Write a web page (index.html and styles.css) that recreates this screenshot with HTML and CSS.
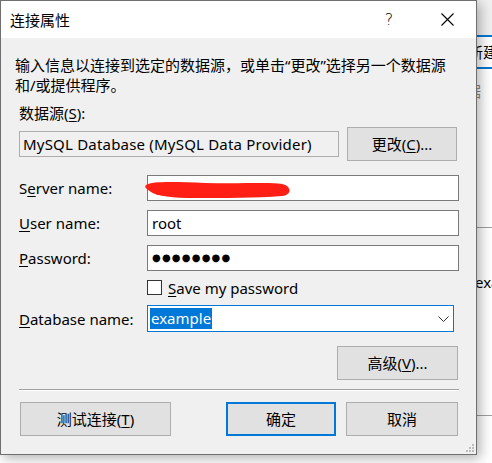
FILE: index.html
```html
<!DOCTYPE html>
<html lang="zh-CN">
<head>
<meta charset="utf-8">
<title>连接属性</title>
<link rel="stylesheet" href="styles.css">
</head>
<body>
<div class="backdrop">
  <div class="bg-toolbar"></div>
  <div class="bg-button">新建</div>
  <div class="bg-hint">数据可</div>
  <div class="bg-line bg-line-1"></div>
  <div class="bg-text">exa</div>
  <div class="bg-line bg-line-2"></div>
</div>

<div class="dialog">
  <div class="titlebar">
    <span class="title">连接属性</span>
    <div class="caption-buttons">
      <span class="caption-btn help">?</span>
      <span class="caption-btn close">
        <svg width="13" height="13" viewBox="0 0 13 13"><path d="M0.5 0.5 L12.5 12.5 M12.5 0.5 L0.5 12.5" stroke="#000" stroke-width="1.1" fill="none"/></svg>
      </span>
    </div>
  </div>

  <div class="content">
    <p class="intro">输入信息以连接到选定的数据源，或单击“更改”选择另一个数据源<br>和/或提供程序。</p>

    <div class="label-line">数据源(<u>S</u>):</div>
    <div class="source-row">
      <div class="source-box">MySQL Database (MySQL Data Provider)</div>
      <button class="btn btn-change">更改(<u>C</u>)...</button>
    </div>

    <div class="field-row row-server">
      <label class="field-label">S<u>e</u>rver name:</label>
      <div class="input server-input">
        <span class="hidden-text">1</span>
        <svg class="scribble" width="150" height="22" viewBox="0 0 150 22"><path d="M1 5 C8 1 30 2 60 3 C95 4 125 2 137 4 C147 6 147 15 137 16 C110 18 80 18 50 18 C28 18 12 16 6 12 C1 9 -1 7 1 5 Z" fill="#ff1f14"/></svg>
      </div>
    </div>

    <div class="field-row">
      <label class="field-label"><u>U</u>ser name:</label>
      <div class="input">root</div>
    </div>

    <div class="field-row">
      <label class="field-label"><u>P</u>assword:</label>
      <div class="input password">●●●●●●●●</div>
    </div>

    <div class="check-row">
      <span class="checkbox"></span>
      <span class="check-text"><u>S</u>ave my password</span>
    </div>

    <div class="field-row row-db">
      <label class="field-label"><u>D</u>atabase name:</label>
      <div class="combo">
        <span class="selected">example</span>
        <svg class="chevron" width="11" height="7" viewBox="0 0 11 7"><path d="M0.5 0.5 L5.5 5.5 L10.5 0.5" stroke="#333" stroke-width="1" fill="none"/></svg>
      </div>
    </div>

    <div class="advanced-row">
      <button class="btn btn-advanced">高级(<u>V</u>)...</button>
    </div>

    <div class="separator"></div>

    <div class="footer">
      <button class="btn btn-test">测试连接(<u>T</u>)</button>
      <button class="btn btn-ok">确定</button>
      <button class="btn btn-cancel">取消</button>
    </div>
  </div>

  <svg class="grip" width="10" height="10" viewBox="0 0 10 10">
    <rect x="7" y="1" width="2" height="2" fill="#bdbdbd"/>
    <rect x="4" y="4" width="2" height="2" fill="#bdbdbd"/>
    <rect x="7" y="4" width="2" height="2" fill="#bdbdbd"/>
    <rect x="1" y="7" width="2" height="2" fill="#bdbdbd"/>
    <rect x="4" y="7" width="2" height="2" fill="#bdbdbd"/>
    <rect x="7" y="7" width="2" height="2" fill="#bdbdbd"/>
  </svg>
</div>
</body>
</html>
```

FILE: styles.css
```css
* { box-sizing: border-box; }
html, body { margin: 0; padding: 0; }
body {
  width: 492px;
  height: 463px;
  overflow: hidden;
  position: relative;
  background: #ffffff;
  font-family: "Noto Sans", "Noto Sans CJK SC", sans-serif;
  font-size: 15px;
  color: #000;
}
u { text-decoration: underline; text-underline-offset: 2px; text-decoration-thickness: 1px; }

/* background application behind the dialog */
.backdrop { position: absolute; inset: 0; background: #ffffff; overflow: hidden; }
.bg-toolbar { position: absolute; left: 0; top: 0; width: 492px; height: 35px; background: #f0f0f0; }
.bg-button {
  position: absolute; left: 430px; top: 35px; width: 62px; height: 34px;
  border-top: 2px solid #0078d7; border-bottom: 2px solid #0078d7;
  background: #fff; padding-left: 38px; line-height: 30px;
  font-family: "Noto Sans CJK SC", sans-serif; font-size: 15px;
  white-space: nowrap; overflow: hidden;
}
.bg-hint {
  position: absolute; left: 451px; top: 81px;
  font-family: "Noto Sans CJK SC", sans-serif; font-size: 15px; line-height: 20px; color: #8a8a8a;
}
.bg-line { position: absolute; left: 0; width: 492px; height: 1px; background: #a0a0a0; }
.bg-line-1 { top: 227px; }
.bg-line-2 { top: 415px; }
.bg-text { position: absolute; left: 475px; top: 272px; line-height: 20px; font-size: 15px; }

/* dialog window */
.dialog {
  position: relative;
  width: 477px;
  height: 455px;
  border: 1px solid #6f6f6f;
  background: #f0f0f0;
  box-shadow: 3px 3px 12px rgba(0, 0, 0, 0.32);
  display: flex;
  flex-direction: column;
}
.titlebar {
  height: 37px;
  background: #ffffff;
  display: flex;
  align-items: center;
  padding-left: 9px;
  flex: none;
}
.title { font-family: "Noto Sans CJK SC", sans-serif; font-size: 15px; line-height: 20px; }
.caption-buttons { margin-left: auto; display: flex; height: 100%; }
.caption-btn { width: 58px; height: 100%; display: flex; align-items: center; justify-content: center; }
.help { font-size: 16px; font-family: "DejaVu Sans", sans-serif; font-weight: 300; padding-bottom: 1px; }

.content { padding: 17px 17px 0 18px; display: flex; flex-direction: column; }
.intro {
  margin: 0 0 0 -4px;
  font-family: "Noto Sans", "Noto Sans CJK SC", sans-serif;
  line-height: 20px;
  white-space: nowrap;
}
.label-line { margin-top: 8px; line-height: 20px; }

.source-row { margin-top: 4px; display: flex; align-items: center; height: 34px; }
.source-box {
  width: 320px; height: 26px;
  border: 1px solid #adadad;
  padding-left: 3px;
  line-height: 24px;
  white-space: nowrap;
  letter-spacing: 0.2px;
}
.btn {
  font: inherit;
  font-family: "Noto Sans", "Noto Sans CJK SC", sans-serif;
  background: #e1e1e1;
  border: 1px solid #adadad;
  color: #000;
  padding: 0;
  display: flex;
  align-items: center;
  justify-content: center;
  line-height: 20px;
}
.btn-change { width: 110px; height: 34px; margin-left: 8px; }

.field-row { margin-top: 9px; display: flex; align-items: center; height: 26px; }
.row-server { margin-top: 14px; }
.field-label { width: 128px; line-height: 20px; }
.input {
  width: 312px; height: 26px;
  border: 1px solid #7a7a7a;
  background: #fff;
  padding-left: 4px;
  line-height: 24px;
  position: relative;
}
.password { font-family: "DejaVu Sans", sans-serif; font-size: 10px; letter-spacing: 1.2px; line-height: 24px; }
.hidden-text { position: absolute; left: 5px; top: 1px; }
.scribble { position: absolute; left: -3px; top: 4px; }

.check-row { margin-top: 9px; display: flex; align-items: center; height: 15px; padding-left: 128px; }
.checkbox { width: 15px; height: 15px; border: 1px solid #333; background: #fff; flex: none; }
.check-text { margin-left: 6px; line-height: 20px; }

.row-db { margin-top: 10px; height: 27px; }
.combo {
  width: 307px; height: 27px;
  border: 1px solid #0078d7;
  background: #fff;
  display: flex; align-items: center;
  padding-left: 2px;
}
.selected { background: #0078d7; color: #fff; line-height: 21px; padding: 0 1px; }
.chevron { margin-left: auto; margin-right: 4px; margin-top: 1px; }

.advanced-row { margin-top: 14px; display: flex; justify-content: flex-end; padding-right: 1px; }
.btn-advanced { width: 121px; height: 34px; }

.separator { margin-top: 9px; height: 2px; border-top: 1px solid #a0a0a0; border-bottom: 1px solid #fff; }

.footer { margin-top: 11px; display: flex; padding-left: 1px; padding-right: 1px; }
.btn-test { width: 151px; height: 34px; }
.btn-ok { width: 110px; height: 34px; margin-left: auto; border: 2px solid #0078d7; }
.btn-cancel { width: 112px; height: 34px; margin-left: 10px; }

.grip { position: absolute; right: 1px; bottom: 1px; }
```
